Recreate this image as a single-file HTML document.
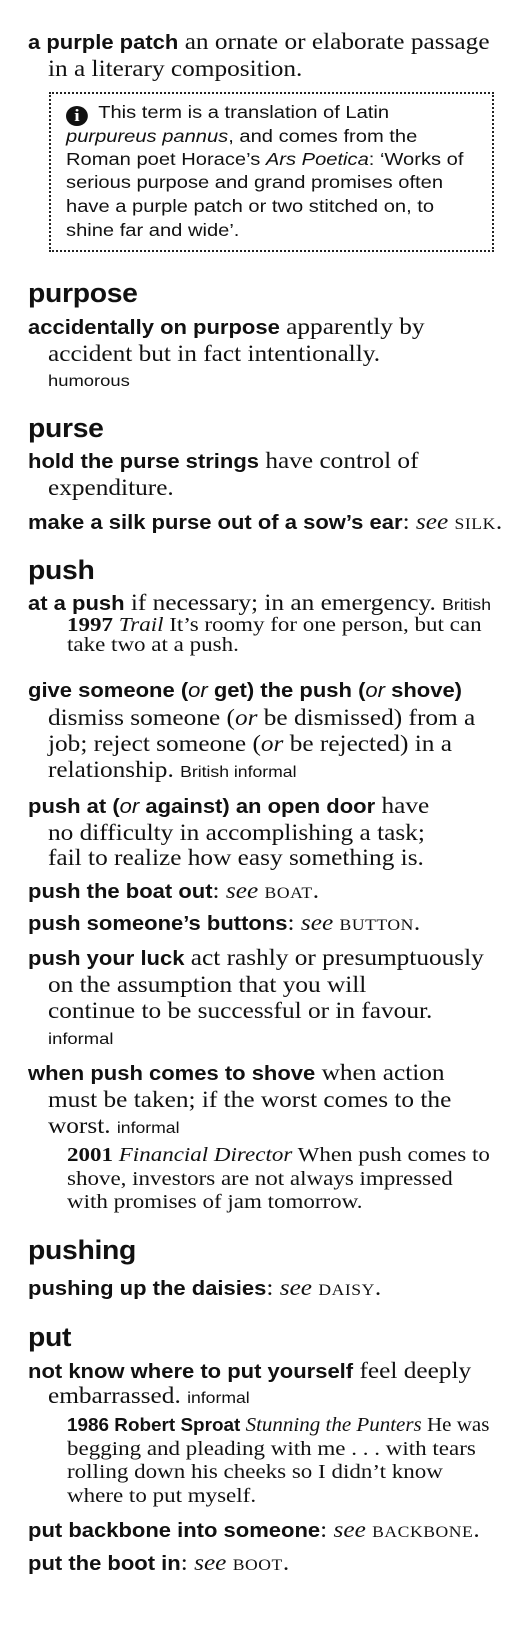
<!DOCTYPE html>
<html><head><meta charset="utf-8"><style>
body{margin:0;width:520px;height:1630px;background:#fff;position:relative;overflow:hidden;color:#111}
.l{position:absolute;white-space:nowrap;line-height:1;font-family:"Liberation Serif",serif;font-size:23px;transform-origin:0 0;transform:scaleX(1.1)}
.b{font-family:"Liberation Sans",sans-serif;font-weight:bold;font-size:20px}
.bi{font-family:"Liberation Sans",sans-serif;font-style:italic;font-weight:normal;font-size:20px}
.lab{font-family:"Liberation Sans",sans-serif;font-size:16px;letter-spacing:0}
.l.lab{transform:scaleX(1.15)}
.l.h{font-family:"Liberation Sans",sans-serif;font-weight:bold;font-size:27px;letter-spacing:-0.3px;transform:scaleX(1.05)}
.l.q{font-size:20px;transform:scaleX(1.15)}
.qb{font-family:"Liberation Sans",sans-serif;font-weight:bold;font-size:18px}
.l.x{font-family:"Liberation Sans",sans-serif;font-size:17.5px;transform:scaleX(1.15)}
.sc{font-variant:small-caps;letter-spacing:0.5px}
.box{position:absolute;left:49px;top:92px;width:441px;height:156px;border:2px dotted #222}
.ic{display:inline-block;width:19px;height:20px;border-radius:50%;background:#111;color:#fff;text-align:center;font-family:"Liberation Serif",serif;font-weight:bold;font-size:17px;line-height:20px;vertical-align:-3px;margin-right:9px}
</style></head><body>
<div class="l" style="left:28px;top:30px"><span class="b">a purple patch</span> an ornate or elaborate passage</div>
<div class="l" style="left:48px;top:57px">in a literary composition.</div>
<div class="box"></div>
<div class="l x" style="left:66px;top:104px"><span class="ic">i</span>This term is a translation of Latin</div>
<div class="l x" style="left:66px;top:128px"><i>purpureus pannus</i>, and comes from the</div>
<div class="l x" style="left:66px;top:151px">Roman poet Horace’s <i>Ars Poetica</i>: ‘Works of</div>
<div class="l x" style="left:66px;top:174px">serious purpose and grand promises often</div>
<div class="l x" style="left:66px;top:198px">have a purple patch or two stitched on, to</div>
<div class="l x" style="left:66px;top:222px">shine far and wide’.</div>

<div class="l h" style="left:28px;top:280px">purpose</div>
<div class="l" style="left:28px;top:315px"><span class="b">accidentally on purpose</span> apparently by</div>
<div class="l" style="left:48px;top:342px">accident but in fact intentionally.</div>
<div class="l lab" style="left:48px;top:374px">humorous</div>

<div class="l h" style="left:28px;top:415px">purse</div>
<div class="l" style="left:28px;top:449px"><span class="b">hold the purse strings</span> have control of</div>
<div class="l" style="left:48px;top:476px">expenditure.</div>
<div class="l" style="left:28px;top:510px"><span class="b">make a silk purse out of a sow’s ear</span>: <i>see</i> <span class="sc">silk</span>.</div>

<div class="l h" style="left:28px;top:557px">push</div>
<div class="l" style="left:28px;top:591px"><span class="b">at a push</span> if necessary; in an emergency. <span class="lab">British</span></div>
<div class="l q" style="left:67px;top:615px"><b>1997</b> <i>Trail</i> It’s roomy for one person, but can</div>
<div class="l q" style="left:67px;top:635px">take two at a push.</div>
<div class="l" style="left:28px;top:678px"><span class="b">give someone (<span class="bi">or</span> get) the push (<span class="bi">or</span> shove)</span></div>
<div class="l" style="left:48px;top:706px">dismiss someone (<i>or</i> be dismissed) from a</div>
<div class="l" style="left:48px;top:732px">job; reject someone (<i>or</i> be rejected) in a</div>
<div class="l" style="left:48px;top:758px">relationship. <span class="lab">British informal</span></div>
<div class="l" style="left:28px;top:794px"><span class="b">push at (<span class="bi">or</span> against) an open door</span> have</div>
<div class="l" style="left:48px;top:821px">no difficulty in accomplishing a task;</div>
<div class="l" style="left:48px;top:846px">fail to realize how easy something is.</div>
<div class="l" style="left:28px;top:879px"><span class="b">push the boat out</span>: <i>see</i> <span class="sc">boat</span>.</div>
<div class="l" style="left:28px;top:911px"><span class="b">push someone’s buttons</span>: <i>see</i> <span class="sc">button</span>.</div>
<div class="l" style="left:28px;top:946px"><span class="b">push your luck</span> act rashly or presumptuously</div>
<div class="l" style="left:48px;top:973px">on the assumption that you will</div>
<div class="l" style="left:48px;top:999px">continue to be successful or in favour.</div>
<div class="l lab" style="left:48px;top:1032px">informal</div>
<div class="l" style="left:28px;top:1061px"><span class="b">when push comes to shove</span> when action</div>
<div class="l" style="left:48px;top:1088px">must be taken; if the worst comes to the</div>
<div class="l" style="left:48px;top:1114px">worst. <span class="lab">informal</span></div>
<div class="l q" style="left:67px;top:1145px"><b>2001</b> <i>Financial Director</i> When push comes to</div>
<div class="l q" style="left:67px;top:1169px">shove, investors are not always impressed</div>
<div class="l q" style="left:67px;top:1192px">with promises of jam tomorrow.</div>

<div class="l h" style="left:28px;top:1237px">pushing</div>
<div class="l" style="left:28px;top:1276px"><span class="b">pushing up the daisies</span>: <i>see</i> <span class="sc">daisy</span>.</div>

<div class="l h" style="left:28px;top:1324px">put</div>
<div class="l" style="left:28px;top:1359px"><span class="b">not know where to put yourself</span> feel deeply</div>
<div class="l" style="left:48px;top:1384px">embarrassed. <span class="lab">informal</span></div>
<div class="l q" style="left:67px;top:1415px;transform:scaleX(1.05)"><span class="qb">1986 Robert Sproat</span> <i>Stunning the Punters</i> He was</div>
<div class="l q" style="left:67px;top:1439px">begging and pleading with me . . . with tears</div>
<div class="l q" style="left:67px;top:1462px">rolling down his cheeks so I didn’t know</div>
<div class="l q" style="left:67px;top:1486px">where to put myself.</div>
<div class="l" style="left:28px;top:1518px"><span class="b">put backbone into someone</span>: <i>see</i> <span class="sc">backbone</span>.</div>
<div class="l" style="left:28px;top:1551px"><span class="b">put the boot in</span>: <i>see</i> <span class="sc">boot</span>.</div>
</body></html>
